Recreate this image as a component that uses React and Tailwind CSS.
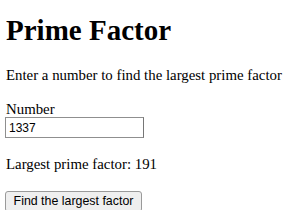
import React, { useState } from 'react';

// largest prime factor of n (trial division)
function largestPrimeFactor(n) {
  let num = Math.floor(Number(n));
  if (!num || num < 2) return '';
  let largest = 1;
  let f = 2;
  while (f * f <= num) {
    while (num % f === 0) {
      largest = f;
      num = num / f;
    }
    f++;
  }
  if (num > 1) largest = num;
  return largest;
}

export default function App() {
  const [value, setValue] = useState('1337');
  const [result, setResult] = useState(191);

  return (
    <div className="min-h-screen bg-white text-black font-['Liberation_Serif','Times_New_Roman',serif] text-[14.85px] leading-[17px] pl-[6px] pt-[14px]">
      <h1 className="text-[29px] leading-[32px] font-bold">Prime Factor</h1>

      <p className="mt-[21px]">Enter a number to find the largest prime factor</p>

      <label htmlFor="number" className="block mt-[17px] leading-[16px]">
        Number
      </label>
      <input
        id="number"
        type="text"
        value={value}
        onChange={(e) => setValue(e.target.value)}
        className="block -ml-[1px] w-[139px] h-[21px] border border-[#8f8f8f] border-r-[#767676] bg-white px-[3px] font-['Liberation_Sans',Arial,sans-serif] text-[12px] text-black outline-none"
      />

      <p className="mt-[17.5px]">Largest prime factor: {result}</p>

      <button
        onClick={() => setResult(largestPrimeFactor(value))}
        className="block -ml-[1px] mt-[18px] w-[137px] h-[21px] rounded-[3px] border border-[#9a9a9a] bg-[#efefef] font-['Liberation_Sans',Arial,sans-serif] text-[12.4px] leading-[19px] text-black"
      >
        Find the largest factor
      </button>
    </div>
  );
}
